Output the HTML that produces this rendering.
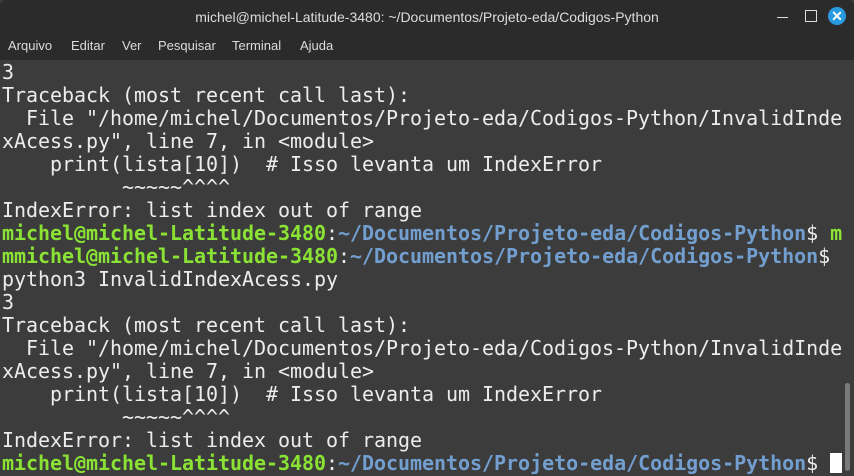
<!DOCTYPE html>
<html><head><style>
body{margin:0;width:854px;height:476px;overflow:hidden;background:#3c3c3c;font-family:"Liberation Sans",sans-serif}
#title{position:absolute;left:0;top:0;width:854px;height:35px;background:#2b2b2b;border-radius:6px 6px 0 0;color:#dcdcdc;font-size:14px;text-align:center;line-height:34px}
#menu{position:absolute;left:0;top:35px;width:854px;height:25px;background:#2b2b2b;color:#dcdcdc;font-size:13px;line-height:22px}
#menu span{position:absolute;top:0}
#term{position:absolute;left:2px;top:61px;font-family:"DejaVu Sans Mono","Liberation Mono",monospace;font-size:20px;line-height:23px;letter-spacing:-0.04px;color:#ececec;white-space:pre}
.g{color:#8ae234;font-weight:bold}.b{color:#729fcf;font-weight:bold}
#cur{display:inline-block;width:12px;height:20px;background:#fff;vertical-align:-3px}
#sb{position:absolute;left:845px;top:383px;width:5px;height:88px;background:#7a7a7a;border-radius:3px}
</style></head><body>
<div id="title">michel@michel-Latitude-3480: ~/Documentos/Projeto-eda/Codigos-Python
<div style="position:absolute;left:777px;top:17px;width:11px;height:1px;background:#ddd"></div>
<div style="position:absolute;left:805px;top:10px;width:10px;height:10px;border:1px solid #ddd"></div>
<div style="position:absolute;left:828px;top:7px;width:18px;height:18px;border-radius:50%;background:#2a9ae0;color:#fff;font-weight:bold;font-size:14px;line-height:18px">✕</div>
</div>
<div id="menu"><span style="left:8px">Arquivo</span><span style="left:71px">Editar</span><span style="left:122px">Ver</span><span style="left:158px">Pesquisar</span><span style="left:232px">Terminal</span><span style="left:300px">Ajuda</span></div>
<div id="sb"></div>
<div id="term">3
Traceback (most recent call last):
  File "/home/michel/Documentos/Projeto-eda/Codigos-Python/InvalidInde
xAcess.py", line 7, in &lt;module&gt;
    print(lista[10])  # Isso levanta um IndexError
          ~~~~~^^^^
IndexError: list index out of range
<span class="g">michel@michel-Latitude-3480</span>:<span class="b">~/Documentos/Projeto-eda/Codigos-Python</span>$ <span class="g">m</span>
<span class="g">mmichel@michel-Latitude-3480</span>:<span class="b">~/Documentos/Projeto-eda/Codigos-Python</span>$
python3 InvalidIndexAcess.py
3
Traceback (most recent call last):
  File "/home/michel/Documentos/Projeto-eda/Codigos-Python/InvalidInde
xAcess.py", line 7, in &lt;module&gt;
    print(lista[10])  # Isso levanta um IndexError
          ~~~~~^^^^
IndexError: list index out of range
<span class="g">michel@michel-Latitude-3480</span>:<span class="b">~/Documentos/Projeto-eda/Codigos-Python</span>$ <span id="cur"></span></div>
</body></html>
